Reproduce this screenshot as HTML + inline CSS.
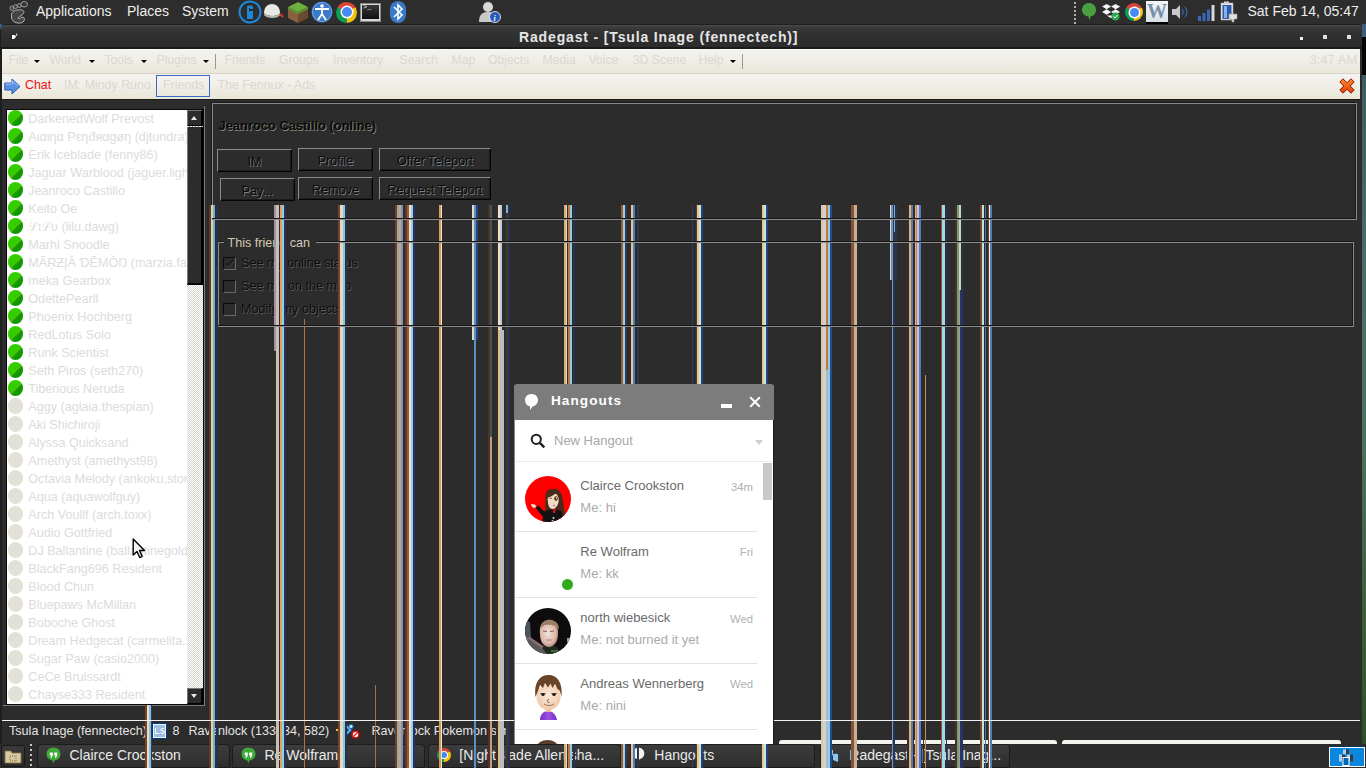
<!DOCTYPE html><html><head><meta charset="utf-8"><style>
html,body{margin:0;padding:0;}
body{width:1366px;height:768px;overflow:hidden;position:relative;background:#2c2c2c;font-family:"Liberation Sans", sans-serif;}
div{box-sizing:border-box;}
</style></head><body>
<div style="position:absolute;left:1362px;top:24px;width:4px;height:13px;background:#3d5f7d"></div>
<div style="position:absolute;left:1362px;top:37px;width:4px;height:38px;background:#060606"></div>
<div style="position:absolute;left:1362px;top:75px;width:4px;height:670px;background:linear-gradient(#3a5e62,#4a6e68 30%,#4a7260 55%,#3a6038 80%,#2e5028)"></div>
<div style="position:absolute;left:0px;top:24px;width:2px;height:5px;background:#3d5f7d"></div>
<div style="position:absolute;left:0px;top:29px;width:2px;height:715px;background:#1e1e1e"></div>
<div style="position:absolute;left:0px;top:0px;width:1366px;height:24px;background:#2d2d2d"></div>
<div style="position:absolute;left:36px;top:4.15px;font-size:14px;line-height:14px;color:#eeeeec;white-space:pre;">Applications</div>
<div style="position:absolute;left:127px;top:4.15px;font-size:14px;line-height:14px;color:#eeeeec;white-space:pre;">Places</div>
<div style="position:absolute;left:182px;top:4.15px;font-size:14px;line-height:14px;color:#eeeeec;white-space:pre;">System</div>
<div style="position:absolute;left:1247.5px;top:4.15px;font-size:14px;line-height:14px;color:#eeeeec;white-space:pre;">Sat Feb 14, 05:47</div>
<div style="position:absolute;left:1px;top:24px;width:1361px;height:25px;background:linear-gradient(#1e1e1e 0px,#1e1e1e 1px,#4c4c4c 1px,#3c3c3c 3px,#333333 7px,#2e2e2e 15px,#2c2c2c 23px,#1a1a1a 23px);border-radius:5px 5px 0 0"></div>
<div style="position:absolute;left:519px;top:29.95px;font-size:14px;line-height:14px;color:#e6e6e6;white-space:pre;font-weight:bold;letter-spacing:0.85px">Radegast - [Tsula Inage (fennectech)]</div>
<div style="position:absolute;left:1300px;top:37px;width:2.5px;height:2.5px;background:#f0f0f0"></div>
<div style="position:absolute;left:1323px;top:35px;width:4px;height:4px;background:#e0e0e0"></div>
<div style="position:absolute;left:1347px;top:35px;width:4px;height:4px;background:#e0e0e0"></div>
<div style="position:absolute;left:2px;top:49px;width:1358px;height:25px;background:linear-gradient(#fafaf8 0px,#fafaf8 1px,#f3f2ee 1px,#f0eee8 10px,#eae7d8);border-bottom:1px solid #d6d3c8"></div>
<div style="position:absolute;left:8.5px;top:53.87px;font-size:12.2px;line-height:12.2px;color:#dad8d2;white-space:pre;">File</div>
<div style="position:absolute;left:49.5px;top:53.87px;font-size:12.2px;line-height:12.2px;color:#dad8d2;white-space:pre;">World</div>
<div style="position:absolute;left:104.5px;top:53.87px;font-size:12.2px;line-height:12.2px;color:#dad8d2;white-space:pre;">Tools</div>
<div style="position:absolute;left:156.5px;top:53.87px;font-size:12.2px;line-height:12.2px;color:#dad8d2;white-space:pre;">Plugins</div>
<div style="position:absolute;left:224.5px;top:53.87px;font-size:12.2px;line-height:12.2px;color:#dad8d2;white-space:pre;">Friends</div>
<div style="position:absolute;left:279.0px;top:53.87px;font-size:12.2px;line-height:12.2px;color:#dad8d2;white-space:pre;">Groups</div>
<div style="position:absolute;left:333.0px;top:53.87px;font-size:12.2px;line-height:12.2px;color:#dad8d2;white-space:pre;">Inventory</div>
<div style="position:absolute;left:399.5px;top:53.87px;font-size:12.2px;line-height:12.2px;color:#dad8d2;white-space:pre;">Search</div>
<div style="position:absolute;left:451.5px;top:53.87px;font-size:12.2px;line-height:12.2px;color:#dad8d2;white-space:pre;">Map</div>
<div style="position:absolute;left:488.0px;top:53.87px;font-size:12.2px;line-height:12.2px;color:#dad8d2;white-space:pre;">Objects</div>
<div style="position:absolute;left:542.5px;top:53.87px;font-size:12.2px;line-height:12.2px;color:#dad8d2;white-space:pre;">Media</div>
<div style="position:absolute;left:588.5px;top:53.87px;font-size:12.2px;line-height:12.2px;color:#dad8d2;white-space:pre;">Voice</div>
<div style="position:absolute;left:632.9px;top:53.87px;font-size:12.2px;line-height:12.2px;color:#dad8d2;white-space:pre;">3D Scene</div>
<div style="position:absolute;left:698.5px;top:53.87px;font-size:12.2px;line-height:12.2px;color:#dad8d2;white-space:pre;">Help</div>
<div style="position:absolute;left:34px;top:59.5px;width:0;height:0;border-left:3px solid transparent;border-right:3px solid transparent;border-top:3.5px solid #000"></div>
<div style="position:absolute;left:89px;top:59.5px;width:0;height:0;border-left:3px solid transparent;border-right:3px solid transparent;border-top:3.5px solid #000"></div>
<div style="position:absolute;left:141px;top:59.5px;width:0;height:0;border-left:3px solid transparent;border-right:3px solid transparent;border-top:3.5px solid #000"></div>
<div style="position:absolute;left:203px;top:59.5px;width:0;height:0;border-left:3px solid transparent;border-right:3px solid transparent;border-top:3.5px solid #000"></div>
<div style="position:absolute;left:729.7px;top:59.5px;width:0;height:0;border-left:3px solid transparent;border-right:3px solid transparent;border-top:3.5px solid #000"></div>
<div style="position:absolute;left:215px;top:54px;width:1px;height:15px;background:#9a9890"></div>
<div style="position:absolute;left:742px;top:54px;width:1px;height:15px;background:#9a9890"></div>
<div style="position:absolute;left:1309.3px;top:53.11px;font-size:13.1px;line-height:13.1px;color:#dad8d2;white-space:pre;">3:47 AM</div>
<div style="position:absolute;left:2px;top:74px;width:1358px;height:25px;background:linear-gradient(#f4f3f0,#f1efea 40%,#eae6d6)"></div>
<div style="position:absolute;left:25px;top:78.70px;font-size:12.4px;line-height:12.4px;color:#ee1111;white-space:pre;">Chat</div>
<div style="position:absolute;left:64px;top:78.70px;font-size:12.4px;line-height:12.4px;color:#dad8d2;white-space:pre;">IM: Mindy Runo</div>
<div style="position:absolute;left:156px;top:75px;width:54px;height:22px;border:1.5px solid #3a6ac8"></div>
<div style="position:absolute;left:163px;top:78.70px;font-size:12.4px;line-height:12.4px;color:#dad8d2;white-space:pre;">Friends</div>
<div style="position:absolute;left:217.5px;top:78.70px;font-size:12.4px;line-height:12.4px;color:#dad8d2;white-space:pre;">The Fennux - Ads</div>
<div style="position:absolute;left:2px;top:99px;width:1360px;height:621px;background:#2c2c2c"></div>
<div style="position:absolute;left:2px;top:99px;width:1358px;height:1px;background:#1c1c1c"></div>
<div style="position:absolute;left:5px;top:108px;width:200px;height:598px;border-right:1px solid #7a7a7a;border-bottom:1px solid #7a7a7a"></div>
<div style="position:absolute;left:6px;top:109px;width:198px;height:596px;background:#0a0a0a"></div>
<div style="position:absolute;left:7px;top:110px;width:180px;height:594px;background:#ffffff"></div>
<div style="position:absolute;left:7px;top:110px;width:180px;height:594px;overflow:hidden">
<div style="position:absolute;left:0.5px;top:0.3px;width:15.5px;height:15.5px;border-radius:50%;background:linear-gradient(135deg,#36d000 0%,#33cc00 58%,#3a8a10 58%,#3a8a10 64%,#0c9c00 64%,#0a9a00 100%)"></div>
<div style="position:absolute;left:21.3px;top:3.43px;font-size:12.6px;line-height:12.6px;color:#dcdcdc;white-space:pre;">DarkenedWolf Prevost</div>
<div style="position:absolute;left:0.5px;top:18.3px;width:15.5px;height:15.5px;border-radius:50%;background:linear-gradient(135deg,#36d000 0%,#33cc00 58%,#3a8a10 58%,#3a8a10 64%,#0c9c00 64%,#0a9a00 100%)"></div>
<div style="position:absolute;left:21.3px;top:21.43px;font-size:12.6px;line-height:12.6px;color:#dcdcdc;white-space:pre;">Αιαιηα Ρεηđяαgøŋ (djtundra)</div>
<div style="position:absolute;left:0.5px;top:36.3px;width:15.5px;height:15.5px;border-radius:50%;background:linear-gradient(135deg,#36d000 0%,#33cc00 58%,#3a8a10 58%,#3a8a10 64%,#0c9c00 64%,#0a9a00 100%)"></div>
<div style="position:absolute;left:21.3px;top:39.43px;font-size:12.6px;line-height:12.6px;color:#dcdcdc;white-space:pre;">Erik Iceblade (fenny86)</div>
<div style="position:absolute;left:0.5px;top:54.3px;width:15.5px;height:15.5px;border-radius:50%;background:linear-gradient(135deg,#36d000 0%,#33cc00 58%,#3a8a10 58%,#3a8a10 64%,#0c9c00 64%,#0a9a00 100%)"></div>
<div style="position:absolute;left:21.3px;top:57.43px;font-size:12.6px;line-height:12.6px;color:#dcdcdc;white-space:pre;">Jaguar Warblood (jaguer.light)</div>
<div style="position:absolute;left:0.5px;top:72.3px;width:15.5px;height:15.5px;border-radius:50%;background:linear-gradient(135deg,#36d000 0%,#33cc00 58%,#3a8a10 58%,#3a8a10 64%,#0c9c00 64%,#0a9a00 100%)"></div>
<div style="position:absolute;left:21.3px;top:75.43px;font-size:12.6px;line-height:12.6px;color:#dcdcdc;white-space:pre;">Jeanroco Castillo</div>
<div style="position:absolute;left:0.5px;top:90.3px;width:15.5px;height:15.5px;border-radius:50%;background:linear-gradient(135deg,#36d000 0%,#33cc00 58%,#3a8a10 58%,#3a8a10 64%,#0c9c00 64%,#0a9a00 100%)"></div>
<div style="position:absolute;left:21.3px;top:93.43px;font-size:12.6px;line-height:12.6px;color:#dcdcdc;white-space:pre;">Keito Oe</div>
<div style="position:absolute;left:0.5px;top:108.3px;width:15.5px;height:15.5px;border-radius:50%;background:linear-gradient(135deg,#36d000 0%,#33cc00 58%,#3a8a10 58%,#3a8a10 64%,#0c9c00 64%,#0a9a00 100%)"></div>
<div style="position:absolute;left:21.3px;top:111.43px;font-size:12.6px;line-height:12.6px;color:#dcdcdc;white-space:pre;">ℒιℒυ (lilu.dawg)</div>
<div style="position:absolute;left:0.5px;top:126.3px;width:15.5px;height:15.5px;border-radius:50%;background:linear-gradient(135deg,#36d000 0%,#33cc00 58%,#3a8a10 58%,#3a8a10 64%,#0c9c00 64%,#0a9a00 100%)"></div>
<div style="position:absolute;left:21.3px;top:129.43px;font-size:12.6px;line-height:12.6px;color:#dcdcdc;white-space:pre;">Marhi Snoodle</div>
<div style="position:absolute;left:0.5px;top:144.3px;width:15.5px;height:15.5px;border-radius:50%;background:linear-gradient(135deg,#36d000 0%,#33cc00 58%,#3a8a10 58%,#3a8a10 64%,#0c9c00 64%,#0a9a00 100%)"></div>
<div style="position:absolute;left:21.3px;top:147.43px;font-size:12.6px;line-height:12.6px;color:#dcdcdc;white-space:pre;">MĀŖƵĮĂ ƊĒMŎŊ (marzia.fan)</div>
<div style="position:absolute;left:0.5px;top:162.3px;width:15.5px;height:15.5px;border-radius:50%;background:linear-gradient(135deg,#36d000 0%,#33cc00 58%,#3a8a10 58%,#3a8a10 64%,#0c9c00 64%,#0a9a00 100%)"></div>
<div style="position:absolute;left:21.3px;top:165.43px;font-size:12.6px;line-height:12.6px;color:#dcdcdc;white-space:pre;">meka Gearbox</div>
<div style="position:absolute;left:0.5px;top:180.3px;width:15.5px;height:15.5px;border-radius:50%;background:linear-gradient(135deg,#36d000 0%,#33cc00 58%,#3a8a10 58%,#3a8a10 64%,#0c9c00 64%,#0a9a00 100%)"></div>
<div style="position:absolute;left:21.3px;top:183.43px;font-size:12.6px;line-height:12.6px;color:#dcdcdc;white-space:pre;">OdettePearll</div>
<div style="position:absolute;left:0.5px;top:198.3px;width:15.5px;height:15.5px;border-radius:50%;background:linear-gradient(135deg,#36d000 0%,#33cc00 58%,#3a8a10 58%,#3a8a10 64%,#0c9c00 64%,#0a9a00 100%)"></div>
<div style="position:absolute;left:21.3px;top:201.43px;font-size:12.6px;line-height:12.6px;color:#dcdcdc;white-space:pre;">Phoenix Hochberg</div>
<div style="position:absolute;left:0.5px;top:216.3px;width:15.5px;height:15.5px;border-radius:50%;background:linear-gradient(135deg,#36d000 0%,#33cc00 58%,#3a8a10 58%,#3a8a10 64%,#0c9c00 64%,#0a9a00 100%)"></div>
<div style="position:absolute;left:21.3px;top:219.43px;font-size:12.6px;line-height:12.6px;color:#dcdcdc;white-space:pre;">RedLotus Solo</div>
<div style="position:absolute;left:0.5px;top:234.3px;width:15.5px;height:15.5px;border-radius:50%;background:linear-gradient(135deg,#36d000 0%,#33cc00 58%,#3a8a10 58%,#3a8a10 64%,#0c9c00 64%,#0a9a00 100%)"></div>
<div style="position:absolute;left:21.3px;top:237.43px;font-size:12.6px;line-height:12.6px;color:#dcdcdc;white-space:pre;">Runk Scientist</div>
<div style="position:absolute;left:0.5px;top:252.3px;width:15.5px;height:15.5px;border-radius:50%;background:linear-gradient(135deg,#36d000 0%,#33cc00 58%,#3a8a10 58%,#3a8a10 64%,#0c9c00 64%,#0a9a00 100%)"></div>
<div style="position:absolute;left:21.3px;top:255.43px;font-size:12.6px;line-height:12.6px;color:#dcdcdc;white-space:pre;">Seth Piros (seth270)</div>
<div style="position:absolute;left:0.5px;top:270.3px;width:15.5px;height:15.5px;border-radius:50%;background:linear-gradient(135deg,#36d000 0%,#33cc00 58%,#3a8a10 58%,#3a8a10 64%,#0c9c00 64%,#0a9a00 100%)"></div>
<div style="position:absolute;left:21.3px;top:273.43px;font-size:12.6px;line-height:12.6px;color:#dcdcdc;white-space:pre;">Tiberious Neruda</div>
<div style="position:absolute;left:0.5px;top:288.3px;width:15.5px;height:15.5px;border-radius:50%;background:#e3e1d6"></div>
<div style="position:absolute;left:21.3px;top:291.43px;font-size:12.6px;line-height:12.6px;color:#dcdcdc;white-space:pre;">Aggy (aglaia.thespian)</div>
<div style="position:absolute;left:0.5px;top:306.3px;width:15.5px;height:15.5px;border-radius:50%;background:#e3e1d6"></div>
<div style="position:absolute;left:21.3px;top:309.43px;font-size:12.6px;line-height:12.6px;color:#dcdcdc;white-space:pre;">Aki Shichiroji</div>
<div style="position:absolute;left:0.5px;top:324.3px;width:15.5px;height:15.5px;border-radius:50%;background:#e3e1d6"></div>
<div style="position:absolute;left:21.3px;top:327.43px;font-size:12.6px;line-height:12.6px;color:#dcdcdc;white-space:pre;">Alyssa Quicksand</div>
<div style="position:absolute;left:0.5px;top:342.3px;width:15.5px;height:15.5px;border-radius:50%;background:#e3e1d6"></div>
<div style="position:absolute;left:21.3px;top:345.43px;font-size:12.6px;line-height:12.6px;color:#dcdcdc;white-space:pre;">Amethyst (amethyst98)</div>
<div style="position:absolute;left:0.5px;top:360.3px;width:15.5px;height:15.5px;border-radius:50%;background:#e3e1d6"></div>
<div style="position:absolute;left:21.3px;top:363.43px;font-size:12.6px;line-height:12.6px;color:#dcdcdc;white-space:pre;">Octavia Melody (ankoku.stone)</div>
<div style="position:absolute;left:0.5px;top:378.3px;width:15.5px;height:15.5px;border-radius:50%;background:#e3e1d6"></div>
<div style="position:absolute;left:21.3px;top:381.43px;font-size:12.6px;line-height:12.6px;color:#dcdcdc;white-space:pre;">Aqua (aquawolfguy)</div>
<div style="position:absolute;left:0.5px;top:396.3px;width:15.5px;height:15.5px;border-radius:50%;background:#e3e1d6"></div>
<div style="position:absolute;left:21.3px;top:399.43px;font-size:12.6px;line-height:12.6px;color:#dcdcdc;white-space:pre;">Arch Voullf (arch.toxx)</div>
<div style="position:absolute;left:0.5px;top:414.3px;width:15.5px;height:15.5px;border-radius:50%;background:#e3e1d6"></div>
<div style="position:absolute;left:21.3px;top:417.43px;font-size:12.6px;line-height:12.6px;color:#dcdcdc;white-space:pre;">Audio Gottfried</div>
<div style="position:absolute;left:0.5px;top:432.3px;width:15.5px;height:15.5px;border-radius:50%;background:#e3e1d6"></div>
<div style="position:absolute;left:21.3px;top:435.43px;font-size:12.6px;line-height:12.6px;color:#dcdcdc;white-space:pre;">DJ Ballantine (ballantinegold)</div>
<div style="position:absolute;left:0.5px;top:450.3px;width:15.5px;height:15.5px;border-radius:50%;background:#e3e1d6"></div>
<div style="position:absolute;left:21.3px;top:453.43px;font-size:12.6px;line-height:12.6px;color:#dcdcdc;white-space:pre;">BlackFang696 Resident</div>
<div style="position:absolute;left:0.5px;top:468.3px;width:15.5px;height:15.5px;border-radius:50%;background:#e3e1d6"></div>
<div style="position:absolute;left:21.3px;top:471.43px;font-size:12.6px;line-height:12.6px;color:#dcdcdc;white-space:pre;">Blood Chun</div>
<div style="position:absolute;left:0.5px;top:486.3px;width:15.5px;height:15.5px;border-radius:50%;background:#e3e1d6"></div>
<div style="position:absolute;left:21.3px;top:489.43px;font-size:12.6px;line-height:12.6px;color:#dcdcdc;white-space:pre;">Bluepaws McMillan</div>
<div style="position:absolute;left:0.5px;top:504.3px;width:15.5px;height:15.5px;border-radius:50%;background:#e3e1d6"></div>
<div style="position:absolute;left:21.3px;top:507.43px;font-size:12.6px;line-height:12.6px;color:#dcdcdc;white-space:pre;">Boboche Ghost</div>
<div style="position:absolute;left:0.5px;top:522.3px;width:15.5px;height:15.5px;border-radius:50%;background:#e3e1d6"></div>
<div style="position:absolute;left:21.3px;top:525.43px;font-size:12.6px;line-height:12.6px;color:#dcdcdc;white-space:pre;">Dream Hedgecat (carmelita.x)</div>
<div style="position:absolute;left:0.5px;top:540.3px;width:15.5px;height:15.5px;border-radius:50%;background:#e3e1d6"></div>
<div style="position:absolute;left:21.3px;top:543.43px;font-size:12.6px;line-height:12.6px;color:#dcdcdc;white-space:pre;">Sugar Paw (casio2000)</div>
<div style="position:absolute;left:0.5px;top:558.3px;width:15.5px;height:15.5px;border-radius:50%;background:#e3e1d6"></div>
<div style="position:absolute;left:21.3px;top:561.43px;font-size:12.6px;line-height:12.6px;color:#dcdcdc;white-space:pre;">CeCe Bruissardt</div>
<div style="position:absolute;left:0.5px;top:576.3px;width:15.5px;height:15.5px;border-radius:50%;background:#e3e1d6"></div>
<div style="position:absolute;left:21.3px;top:579.43px;font-size:12.6px;line-height:12.6px;color:#dcdcdc;white-space:pre;">Chayse333 Resident</div>
</div>
<div style="position:absolute;left:187px;top:110px;width:16px;height:594px;background:#2c2c2c"></div>
<div style="position:absolute;left:187px;top:110px;width:16px;height:16px;background:#2c2c2c;border-top:1px solid #777;border-left:1px solid #777;border-right:2px solid #000;border-bottom:1px solid #000"></div>
<div style="position:absolute;left:191px;top:115.5px;width:0;height:0;border-left:3.5px solid transparent;border-right:3.5px solid transparent;border-bottom:4px solid #e8e8e8"></div>
<div style="position:absolute;left:187px;top:126px;width:16px;height:1px;background:repeating-linear-gradient(90deg,#f0f0f0 0 2px,#888 2px 3px)"></div>
<div style="position:absolute;left:187px;top:127px;width:16px;height:158px;background:#2c2c2c;border-left:1px solid #777;border-right:2px solid #000;border-bottom:2px solid #000"></div>
<div style="position:absolute;left:187px;top:285px;width:16px;height:403px;background-color:#f4f3ef;background-image:repeating-conic-gradient(#d8d5cc 0 25%,#ffffff 0 50%);background-size:2px 2px"></div>
<div style="position:absolute;left:187px;top:688px;width:16px;height:16px;background:#2c2c2c;border-top:1px solid #777;border-left:1px solid #777;border-right:2px solid #000;border-bottom:1px solid #000"></div>
<div style="position:absolute;left:191px;top:694px;width:0;height:0;border-left:3.5px solid transparent;border-right:3.5px solid transparent;border-top:4px solid #e8e8e8"></div>
<div style="position:absolute;left:204px;top:106px;width:1px;height:600px;background:#7a7a7a"></div>
<div style="position:absolute;left:3px;top:705px;width:202px;height:1px;background:#7a7a7a"></div>
<div style="position:absolute;left:211px;top:102px;width:1145px;height:117px;border:1px solid #181818"></div>
<div style="position:absolute;left:212px;top:103px;width:1145px;height:117px;border:1px solid #8a8a8a;border-top-color:#8a8a8a"></div>
<div style="position:absolute;left:218.5px;top:120.28px;font-size:12.9px;line-height:12.9px;color:#080808;white-space:pre;font-weight:bold;text-shadow:0.8px 0.8px 0 #8a8478">Jeanroco Castillo (online)</div>
<div style="position:absolute;left:217px;top:149px;width:75px;height:23px;background:#2c2c2c;border-top:1px solid #8c8c8c;border-left:1px solid #8c8c8c;border-right:1px solid #050505;border-bottom:1px solid #050505;box-shadow:inset -1px -1px 0 #1c1c1c"></div>
<div style="position:absolute;left:217px;top:150.5px;width:75px;height:23px;line-height:23px;text-align:center;font-size:12.6px;color:#080808;text-shadow:0.8px 0.8px 0 #7a8084">IM</div>
<div style="position:absolute;left:298px;top:148px;width:75px;height:23px;background:#2c2c2c;border-top:1px solid #8c8c8c;border-left:1px solid #8c8c8c;border-right:1px solid #050505;border-bottom:1px solid #050505;box-shadow:inset -1px -1px 0 #1c1c1c"></div>
<div style="position:absolute;left:298px;top:149.5px;width:75px;height:23px;line-height:23px;text-align:center;font-size:12.6px;color:#080808;text-shadow:0.8px 0.8px 0 #7a8084">Profile</div>
<div style="position:absolute;left:379px;top:148px;width:112px;height:23px;background:#2c2c2c;border-top:1px solid #8c8c8c;border-left:1px solid #8c8c8c;border-right:1px solid #050505;border-bottom:1px solid #050505;box-shadow:inset -1px -1px 0 #1c1c1c"></div>
<div style="position:absolute;left:379px;top:149.5px;width:112px;height:23px;line-height:23px;text-align:center;font-size:12.6px;color:#080808;text-shadow:0.8px 0.8px 0 #7a8084">Offer Teleport</div>
<div style="position:absolute;left:220px;top:178px;width:75px;height:23px;background:#2c2c2c;border-top:1px solid #8c8c8c;border-left:1px solid #8c8c8c;border-right:1px solid #050505;border-bottom:1px solid #050505;box-shadow:inset -1px -1px 0 #1c1c1c"></div>
<div style="position:absolute;left:220px;top:179.5px;width:75px;height:23px;line-height:23px;text-align:center;font-size:12.6px;color:#080808;text-shadow:0.8px 0.8px 0 #7a8084">Pay...</div>
<div style="position:absolute;left:298px;top:177px;width:75px;height:23px;background:#2c2c2c;border-top:1px solid #8c8c8c;border-left:1px solid #8c8c8c;border-right:1px solid #050505;border-bottom:1px solid #050505;box-shadow:inset -1px -1px 0 #1c1c1c"></div>
<div style="position:absolute;left:298px;top:178.5px;width:75px;height:23px;line-height:23px;text-align:center;font-size:12.6px;color:#080808;text-shadow:0.8px 0.8px 0 #7a8084">Remove</div>
<div style="position:absolute;left:379px;top:177px;width:112px;height:23px;background:#2c2c2c;border-top:1px solid #8c8c8c;border-left:1px solid #8c8c8c;border-right:1px solid #050505;border-bottom:1px solid #050505;box-shadow:inset -1px -1px 0 #1c1c1c"></div>
<div style="position:absolute;left:379px;top:178.5px;width:112px;height:23px;line-height:23px;text-align:center;font-size:12.6px;color:#080808;text-shadow:0.8px 0.8px 0 #7a8084">Request Teleport</div>
<div style="position:absolute;left:217px;top:241px;width:1136px;height:85px;border:1px solid #181818"></div>
<div style="position:absolute;left:218px;top:242px;width:1136px;height:85px;border:1px solid #8a8a8a"></div>
<div style="position:absolute;left:224px;top:236px;width:92px;height:12px;background:#2c2c2c"></div>
<div style="position:absolute;left:227.5px;top:236.63px;font-size:12.6px;line-height:12.6px;color:#d2cab4;white-space:pre;">This friend can</div>
<div style="position:absolute;left:223px;top:257px;width:13px;height:13px;border-top:1px solid #0a0a0a;border-left:1px solid #0a0a0a;border-right:1px solid #6a6a6a;border-bottom:1px solid #6a6a6a;background:#2c2c2c"></div>
<div style="position:absolute;left:241px;top:256.73px;font-size:12.6px;line-height:12.6px;color:#0c0c0c;white-space:pre;text-shadow:0.8px 0.8px 0 #5a5c5c">See my online status</div>
<svg style="position:absolute;left:224px;top:258px" width="11" height="11" viewBox="0 0 11 11"><path d="M2 5.5 L4.5 8 L9 2.5" stroke="#161616" stroke-width="1.8" fill="none"/><path d="M2.8 6.8 L4.8 8.8 L9.5 3.5" stroke="#555" stroke-width="0.8" fill="none"/></svg>
<div style="position:absolute;left:223px;top:280px;width:13px;height:13px;border-top:1px solid #0a0a0a;border-left:1px solid #0a0a0a;border-right:1px solid #6a6a6a;border-bottom:1px solid #6a6a6a;background:#2c2c2c"></div>
<div style="position:absolute;left:241px;top:279.73px;font-size:12.6px;line-height:12.6px;color:#0c0c0c;white-space:pre;text-shadow:0.8px 0.8px 0 #5a5c5c">See me on the map</div>
<div style="position:absolute;left:223px;top:303px;width:13px;height:13px;border-top:1px solid #0a0a0a;border-left:1px solid #0a0a0a;border-right:1px solid #6a6a6a;border-bottom:1px solid #6a6a6a;background:#2c2c2c"></div>
<div style="position:absolute;left:241px;top:302.73px;font-size:12.6px;line-height:12.6px;color:#0c0c0c;white-space:pre;text-shadow:0.8px 0.8px 0 #5a5c5c">Modify my objects</div>
<div style="position:absolute;left:2px;top:720px;width:1358px;height:1px;background:#f2f2f2"></div>
<div style="position:absolute;left:9px;top:725.13px;font-size:12.6px;line-height:12.6px;color:#e4e4e4;white-space:pre;">Tsula Inage (fennectech)</div>
<div style="position:absolute;left:151.5px;top:723px;width:15px;height:15.5px;background:#9cc0e4;border:1px solid #063a88;box-shadow:inset 0 0 0 1px #f0f6ff"></div>
<div style="position:absolute;left:154px;top:726.26px;font-size:9.5px;line-height:9.5px;color:#ffffff;white-space:pre;font-weight:bold;text-shadow:0 0 1px #2a6ab8">L$</div>
<div style="position:absolute;left:172.5px;top:725.13px;font-size:12.6px;line-height:12.6px;color:#e4e4e4;white-space:pre;">8</div>
<div style="position:absolute;left:188.5px;top:725.13px;font-size:12.6px;line-height:12.6px;color:#e4e4e4;white-space:pre;">Ravenlock (133, 34, 582)</div>
<svg style="position:absolute;left:330px;top:718px" width="36" height="24" viewBox="0 0 36 24">
<rect x="6" y="11" width="4.5" height="2" fill="#f0c040"/>
<path d="M15 7 L20.5 12 L15.5 16.5" stroke="#1a5aa8" stroke-width="3.2" fill="none" stroke-linejoin="round"/>
<path d="M15 7 L20.5 12 L15.5 16.5" stroke="#80c8f0" stroke-width="1.3" fill="none" stroke-linejoin="round"/>
<circle cx="21" cy="8.5" r="2.2" fill="#a8e0f8" stroke="#1a5aa8" stroke-width="1"/>
<circle cx="25.5" cy="16.5" r="3.3" fill="#ffffff" stroke="#e01010" stroke-width="1.4"/><path d="M23.5 18.5 L27.5 14.5" stroke="#e01010" stroke-width="1.2"/></svg>
<div style="position:absolute;left:371.5px;top:725.13px;font-size:12.6px;line-height:12.6px;color:#e4e4e4;white-space:pre;">Ravenlock Pokemon sim</div>
<div style="position:absolute;left:0px;top:744px;width:1366px;height:24px;background:#2c2c2c"></div>
<div style="position:absolute;left:779px;top:740px;width:278px;height:4px;background:#f4f4ee;border-radius:3px 3px 0 0"></div>
<div style="position:absolute;left:1062px;top:740px;width:279px;height:4px;background:#f4f4ee;border-radius:3px 3px 0 0"></div>
<div style="position:absolute;left:1px;top:745px;width:24px;height:22px;background:linear-gradient(#3a3a3a,#2a2a2a);border:1px solid #1a1a1a;border-radius:3px"></div>
<svg style="position:absolute;left:4px;top:748px" width="18" height="16" viewBox="0 0 18 16"><path d="M1 3 L7 3 L8 5 L17 5 L17 15 L1 15 Z" fill="#d8c8a0" stroke="#8a7050" stroke-width="0.8"/><rect x="6" y="8" width="6" height="5" fill="none" stroke="#6a5030" stroke-width="0.8" stroke-dasharray="1 1"/></svg>
<div style="position:absolute;left:30px;top:744px;width:2px;height:2px;background:#c8c8c8"></div>
<div style="position:absolute;left:30px;top:749px;width:2px;height:2px;background:#c8c8c8"></div>
<div style="position:absolute;left:30px;top:754px;width:2px;height:2px;background:#c8c8c8"></div>
<div style="position:absolute;left:30px;top:759px;width:2px;height:2px;background:#c8c8c8"></div>
<div style="position:absolute;left:30px;top:764px;width:2px;height:2px;background:#c8c8c8"></div>
<div style="position:absolute;left:37px;top:744px;width:193px;height:24px;background:linear-gradient(#3c3c3c,#2e2e2e);border:1px solid #1c1c1c;border-radius:4px 4px 0 0"></div>
<svg style="position:absolute;left:37px;margin-left:9px;top:747px" width="15" height="17" viewBox="0 0 15 17"><path d="M7.5 0.5 C11.5 0.5 14.5 3.3 14.5 7 C14.5 10.5 12 13 8.5 13.5 L7.2 16.5 L6.5 13.4 C3 13 0.5 10.5 0.5 7 C0.5 3.3 3.5 0.5 7.5 0.5 Z" fill="#3eaa3a"/><path d="M3.8 5.5 h3 v3 l-1.2 2.2 h-1.2 l0.8 -2.2 h-1.4 Z M8.2 5.5 h3 v3 l-1.2 2.2 h-1.2 l0.8 -2.2 h-1.4 Z" fill="#fff"/></svg>
<div style="position:absolute;left:69.5px;top:747.85px;font-size:14px;line-height:14px;color:#eaeaea;white-space:pre;">Clairce Crookston</div>
<div style="position:absolute;left:232px;top:744px;width:193px;height:24px;background:linear-gradient(#3c3c3c,#2e2e2e);border:1px solid #1c1c1c;border-radius:4px 4px 0 0"></div>
<svg style="position:absolute;left:232px;margin-left:9px;top:747px" width="15" height="17" viewBox="0 0 15 17"><path d="M7.5 0.5 C11.5 0.5 14.5 3.3 14.5 7 C14.5 10.5 12 13 8.5 13.5 L7.2 16.5 L6.5 13.4 C3 13 0.5 10.5 0.5 7 C0.5 3.3 3.5 0.5 7.5 0.5 Z" fill="#3eaa3a"/><path d="M3.8 5.5 h3 v3 l-1.2 2.2 h-1.2 l0.8 -2.2 h-1.4 Z M8.2 5.5 h3 v3 l-1.2 2.2 h-1.2 l0.8 -2.2 h-1.4 Z" fill="#fff"/></svg>
<div style="position:absolute;left:264.5px;top:747.85px;font-size:14px;line-height:14px;color:#eaeaea;white-space:pre;">Re Wolfram</div>
<div style="position:absolute;left:427.5px;top:744px;width:193px;height:24px;background:linear-gradient(#3c3c3c,#2e2e2e);border:1px solid #1c1c1c;border-radius:4px 4px 0 0"></div>
<div style="position:absolute;left:427.5px;margin-left:9px;top:748px;width:14px;height:14px;border-radius:50%;background:conic-gradient(from -60deg,#db4437 0 120deg,#f4c20d 120deg 240deg,#0f9d58 240deg 360deg)"><div style="position:absolute;left:4px;top:4px;width:6px;height:6px;border-radius:50%;background:#4285f4;box-shadow:0 0 0 1px #fff"></div></div>
<div style="position:absolute;left:459.3px;top:747.85px;font-size:14px;line-height:14px;color:#eaeaea;white-space:pre;">[NightBlade Allen sha...</div>
<div style="position:absolute;left:625px;top:744px;width:190px;height:24px;background:linear-gradient(#3c3c3c,#2e2e2e);border:1px solid #1c1c1c;border-radius:4px 4px 0 0"></div>
<svg style="position:absolute;left:625px;margin-left:6.5px;top:747px" width="13" height="17" viewBox="0 0 13 17"><path d="M6.5 0.8 C10 0.8 12.3 3.3 12.3 6.5 C12.3 9.5 10.3 11.6 7.5 12.2 L5.5 16 L5.5 12.1 C2.6 11.6 0.7 9.5 0.7 6.5 C0.7 3.3 3 0.8 6.5 0.8 Z" fill="#f4f4f4"/></svg>
<div style="position:absolute;left:654.3px;top:747.85px;font-size:14px;line-height:14px;color:#eaeaea;white-space:pre;">Hangouts</div>
<div style="position:absolute;left:820px;top:744px;width:190px;height:24px;background:linear-gradient(#3c3c3c,#2e2e2e);border:1px solid #1c1c1c;border-radius:4px 4px 0 0"></div>
<svg style="position:absolute;left:820px;margin-left:9px;top:748px" width="12" height="15" viewBox="0 0 12 15"><path d="M1 1 L4 2 L4 7 L1 8 Z" fill="#8cc8f8"/><path d="M4 5.5 L9 6 L9 14 L4 12 Z" fill="#8cc8f8"/><path d="M4 2 L6 3 L6 6 L4 6 Z M9 6 L11 6.5 L11 13 L9 14 Z" fill="#3a3a36"/></svg>
<div style="position:absolute;left:849.3px;top:747.85px;font-size:14px;line-height:14px;color:#eaeaea;white-space:pre;">Radegast - [Tsula Inag...</div>
<div style="position:absolute;left:1328.5px;top:746.5px;width:36px;height:20px;background:#0a88e0;border:1px solid #ffffff;box-shadow:0 -1px 0 #003a60"></div>
<svg style="position:absolute;left:1338px;top:749px" width="16" height="17" viewBox="0 0 16 17"><rect x="5" y="0.5" width="3" height="5" fill="#a8d0f8"/><rect x="8" y="0.5" width="3" height="5" fill="#3a3a38"/><rect x="1" y="5.5" width="3" height="7" fill="#a8d0f8"/><rect x="4" y="5.5" width="3" height="7" fill="#3a3a38"/><rect x="9" y="5.5" width="3" height="7" fill="#a8d0f8"/><rect x="12" y="5.5" width="3" height="7" fill="#3a3a38"/><rect x="4.5" y="8" width="7" height="9" fill="#ffffff"/><rect x="5.5" y="9" width="5" height="7" fill="#0068b8"/></svg>
<div style="position:absolute;left:209px;top:205px;width:1.5px;height:563px;background:#5a3a30"></div>
<div style="position:absolute;left:211px;top:205px;width:2px;height:563px;background:#e8d090"></div>
<div style="position:absolute;left:213px;top:205px;width:2px;height:563px;background:#70b0e0"></div>
<div style="position:absolute;left:215.5px;top:205px;width:2.5px;height:563px;background:#2a3048"></div>
<div style="position:absolute;left:274px;top:205px;width:2px;height:146px;background:#a090a0"></div>
<div style="position:absolute;left:276px;top:205px;width:3px;height:563px;background:#c8c0b0"></div>
<div style="position:absolute;left:304px;top:319px;width:1px;height:449px;background:#b07040"></div>
<div style="position:absolute;left:145px;top:705px;width:2px;height:63px;background:#804028"></div>
<div style="position:absolute;left:147px;top:705px;width:2px;height:63px;background:#e8e0b8"></div>
<div style="position:absolute;left:149px;top:705px;width:2px;height:63px;background:#80c0e0"></div>
<div style="position:absolute;left:151px;top:705px;width:1px;height:63px;background:#303860"></div>
<div style="position:absolute;left:280px;top:205px;width:2px;height:563px;background:#e0a060"></div>
<div style="position:absolute;left:282px;top:205px;width:2px;height:563px;background:#90d0e0"></div>
<div style="position:absolute;left:284px;top:205px;width:2px;height:563px;background:#2a3060"></div>
<div style="position:absolute;left:338px;top:205px;width:2px;height:563px;background:#7a4030"></div>
<div style="position:absolute;left:340px;top:205px;width:3px;height:563px;background:#e0dcb8"></div>
<div style="position:absolute;left:343px;top:205px;width:2px;height:563px;background:#88c8e8"></div>
<div style="position:absolute;left:345px;top:205px;width:2px;height:563px;background:#283050"></div>
<div style="position:absolute;left:395px;top:205px;width:2px;height:563px;background:#6a4030"></div>
<div style="position:absolute;left:397px;top:205px;width:2px;height:563px;background:#b8a080"></div>
<div style="position:absolute;left:399px;top:205px;width:2px;height:563px;background:#a0acc0"></div>
<div style="position:absolute;left:401px;top:205px;width:2px;height:563px;background:#909098"></div>
<div style="position:absolute;left:405px;top:205px;width:1.5px;height:563px;background:#5a3a30"></div>
<div style="position:absolute;left:406.5px;top:205px;width:2.5px;height:563px;background:#a05830"></div>
<div style="position:absolute;left:409px;top:205px;width:2px;height:563px;background:#e8e4d0"></div>
<div style="position:absolute;left:411px;top:205px;width:2px;height:563px;background:#90d0f0"></div>
<div style="position:absolute;left:413px;top:205px;width:2px;height:563px;background:#283060"></div>
<div style="position:absolute;left:439px;top:205px;width:2px;height:563px;background:#e09850"></div>
<div style="position:absolute;left:441px;top:205px;width:1px;height:563px;background:#e0e8e0"></div>
<div style="position:absolute;left:472px;top:205px;width:2px;height:135px;background:#e0dcc8"></div>
<div style="position:absolute;left:474px;top:205px;width:2px;height:563px;background:#5890c8"></div>
<div style="position:absolute;left:476px;top:205px;width:2px;height:135px;background:#304080"></div>
<div style="position:absolute;left:375px;top:685px;width:1px;height:83px;background:#a87040"></div>
<div style="position:absolute;left:488px;top:205px;width:2px;height:563px;background:#503028"></div>
<div style="position:absolute;left:490px;top:205px;width:2px;height:232px;background:#405850"></div>
<div style="position:absolute;left:490px;top:437px;width:2px;height:331px;background:#c0a080"></div>
<div style="position:absolute;left:496px;top:205px;width:2px;height:563px;background:#3a2a28"></div>
<div style="position:absolute;left:498px;top:205px;width:2px;height:125px;background:#e8e4c8"></div>
<div style="position:absolute;left:498px;top:330px;width:2px;height:438px;background:#d8c080"></div>
<div style="position:absolute;left:500px;top:205px;width:2px;height:125px;background:#c0c8e0"></div>
<div style="position:absolute;left:500px;top:330px;width:4px;height:438px;background:#b8bcc8"></div>
<div style="position:absolute;left:506px;top:205px;width:2px;height:8px;background:#80b0d0"></div>
<div style="position:absolute;left:506px;top:213px;width:2px;height:555px;background:#3a3a30"></div>
<div style="position:absolute;left:508px;top:205px;width:2px;height:563px;background:#283050"></div>
<div style="position:absolute;left:564px;top:205px;width:2px;height:563px;background:#d8b070"></div>
<div style="position:absolute;left:566px;top:205px;width:1px;height:563px;background:#e8dcc8"></div>
<div style="position:absolute;left:568px;top:205px;width:2px;height:563px;background:#c07840"></div>
<div style="position:absolute;left:570px;top:205px;width:2px;height:563px;background:#88d0e0"></div>
<div style="position:absolute;left:573px;top:205px;width:2px;height:563px;background:#2a3050"></div>
<div style="position:absolute;left:621px;top:205px;width:2px;height:563px;background:#a05a30"></div>
<div style="position:absolute;left:623px;top:205px;width:2px;height:563px;background:#90d8e8"></div>
<div style="position:absolute;left:625px;top:205px;width:2px;height:563px;background:#303860"></div>
<div style="position:absolute;left:629px;top:205px;width:2px;height:563px;background:#3a2828"></div>
<div style="position:absolute;left:631px;top:205px;width:2px;height:563px;background:#e8c880"></div>
<div style="position:absolute;left:633px;top:205px;width:2px;height:563px;background:#4080d0"></div>
<div style="position:absolute;left:637px;top:205px;width:2px;height:563px;background:#30383c"></div>
<div style="position:absolute;left:692px;top:205px;width:1px;height:563px;background:#303a70"></div>
<div style="position:absolute;left:696px;top:205px;width:1px;height:563px;background:#5a3a30"></div>
<div style="position:absolute;left:697px;top:205px;width:2px;height:563px;background:#e8c888"></div>
<div style="position:absolute;left:699px;top:205px;width:2px;height:563px;background:#c0e8e8"></div>
<div style="position:absolute;left:701px;top:205px;width:2px;height:563px;background:#284080"></div>
<div style="position:absolute;left:762px;top:205px;width:2px;height:563px;background:#e8c888"></div>
<div style="position:absolute;left:764px;top:205px;width:2px;height:563px;background:#c0e8e8"></div>
<div style="position:absolute;left:766px;top:205px;width:2px;height:563px;background:#284080"></div>
<div style="position:absolute;left:821px;top:205px;width:2px;height:563px;background:#d8c8a8"></div>
<div style="position:absolute;left:823px;top:205px;width:3px;height:563px;background:#d4d0cc"></div>
<div style="position:absolute;left:826px;top:205px;width:2px;height:165px;background:#c07840"></div>
<div style="position:absolute;left:826px;top:370px;width:2px;height:398px;background:#a0c0d0"></div>
<div style="position:absolute;left:828px;top:205px;width:2px;height:563px;background:#88d0e0"></div>
<div style="position:absolute;left:830px;top:205px;width:2px;height:563px;background:#284890"></div>
<div style="position:absolute;left:851px;top:205px;width:2px;height:563px;background:#905030"></div>
<div style="position:absolute;left:853px;top:205px;width:1px;height:563px;background:#706040"></div>
<div style="position:absolute;left:854px;top:205px;width:3px;height:563px;background:#c8b090"></div>
<div style="position:absolute;left:890px;top:205px;width:1px;height:75px;background:#d0d8e0"></div>
<div style="position:absolute;left:891px;top:205px;width:2px;height:75px;background:#7090b0"></div>
<div style="position:absolute;left:893px;top:205px;width:4px;height:75px;background:#303448"></div>
<div style="position:absolute;left:893px;top:280px;width:1.5px;height:488px;background:#2a3450"></div>
<div style="position:absolute;left:892px;top:205px;width:1px;height:563px;background:#6a98c8"></div>
<div style="position:absolute;left:894px;top:205px;width:1px;height:27px;background:#70b0e0"></div>
<div style="position:absolute;left:925px;top:375px;width:1px;height:393px;background:#c89050"></div>
<div style="position:absolute;left:907px;top:205px;width:2px;height:563px;background:#3a2a2a"></div>
<div style="position:absolute;left:909px;top:205px;width:2px;height:563px;background:#e8b060"></div>
<div style="position:absolute;left:911px;top:205px;width:2px;height:563px;background:#4080d0"></div>
<div style="position:absolute;left:913px;top:205px;width:1px;height:563px;background:#3a2a2a"></div>
<div style="position:absolute;left:915px;top:205px;width:1px;height:563px;background:#e8b060"></div>
<div style="position:absolute;left:916px;top:205px;width:1px;height:563px;background:#d08040"></div>
<div style="position:absolute;left:917px;top:205px;width:2px;height:563px;background:#d0c0d8"></div>
<div style="position:absolute;left:919px;top:205px;width:2px;height:563px;background:#4080d0"></div>
<div style="position:absolute;left:923px;top:205px;width:1px;height:563px;background:#3a2a28"></div>
<div style="position:absolute;left:941px;top:205px;width:1px;height:563px;background:#a05030"></div>
<div style="position:absolute;left:942px;top:205px;width:3px;height:563px;background:#a0d8e8"></div>
<div style="position:absolute;left:946px;top:205px;width:1px;height:563px;background:#283060"></div>
<div style="position:absolute;left:955px;top:205px;width:2px;height:563px;background:#4a3028"></div>
<div style="position:absolute;left:957px;top:205px;width:2px;height:563px;background:#809880"></div>
<div style="position:absolute;left:959px;top:205px;width:2px;height:85px;background:#c0e0b0"></div>
<div style="position:absolute;left:959px;top:290px;width:1px;height:478px;background:#90a888"></div>
<div style="position:absolute;left:960px;top:290px;width:3px;height:478px;background:#2a3460"></div>
<div style="position:absolute;left:962px;top:205px;width:1px;height:563px;background:#283070"></div>
<div style="position:absolute;left:980px;top:205px;width:2px;height:563px;background:#804028"></div>
<div style="position:absolute;left:982px;top:205px;width:2px;height:563px;background:#c0e8c8"></div>
<div style="position:absolute;left:985px;top:205px;width:1px;height:563px;background:#4070c0"></div>
<div style="position:absolute;left:988px;top:205px;width:1px;height:563px;background:#804028"></div>
<div style="position:absolute;left:989px;top:205px;width:1px;height:563px;background:#f0f0f0"></div>
<div style="position:absolute;left:990px;top:205px;width:2px;height:563px;background:#5080b0"></div>
<div style="position:absolute;left:212px;top:218px;width:1144px;height:1px;background:#181818"></div>
<div style="position:absolute;left:212px;top:219px;width:1145px;height:1px;background:#8a8a8a"></div>
<div style="position:absolute;left:218px;top:325px;width:1135px;height:1px;background:#181818"></div>
<div style="position:absolute;left:218px;top:326px;width:1136px;height:1px;background:#8a8a8a"></div>
<div style="position:absolute;left:218px;top:241px;width:6px;height:1px;background:#181818"></div>
<div style="position:absolute;left:218px;top:242px;width:6px;height:1px;background:#8a8a8a"></div>
<div style="position:absolute;left:316px;top:241px;width:1037px;height:1px;background:#181818"></div>
<div style="position:absolute;left:316px;top:242px;width:1038px;height:1px;background:#8a8a8a"></div>
<div style="position:absolute;left:2px;top:720px;width:1358px;height:1px;background:#f2f2f2"></div>
<div style="position:absolute;left:514px;top:384px;width:260px;height:36px;background:#7b7c7b;border-radius:3px 3px 0 0"></div>
<div style="position:absolute;left:514px;top:420px;width:260px;height:324px;background:#ffffff;border-left:1px solid #8a8a8a;border-right:1px solid #1e1e1e"></div>
<svg style="position:absolute;left:524px;top:393px" width="15" height="18" viewBox="0 0 15 18"><path d="M7.5 1 C11.5 1 14 3.8 14 7.2 C14 10.5 11.5 12.8 8.5 13.5 L6 17 L6 13.3 C3 12.8 1 10.5 1 7.2 C1 3.8 3.5 1 7.5 1 Z" fill="#ffffff"/></svg>
<div style="position:absolute;left:551px;top:394.49px;font-size:13.6px;line-height:13.6px;color:#ffffff;white-space:pre;font-weight:bold;letter-spacing:1.05px">Hangouts</div>
<div style="position:absolute;left:721px;top:403.5px;width:11px;height:4px;background:#ffffff"></div>
<svg style="position:absolute;left:749px;top:396px" width="12" height="12" viewBox="0 0 12 12"><path d="M1.2 1.2 L10.8 10.8 M10.8 1.2 L1.2 10.8" stroke="#fff" stroke-width="2"/></svg>
<svg style="position:absolute;left:530px;top:433px" width="16" height="16" viewBox="0 0 16 16"><circle cx="6.3" cy="6.3" r="4.6" fill="none" stroke="#222" stroke-width="2"/><path d="M9.6 9.6 L14.3 14.3" stroke="#222" stroke-width="2.4"/></svg>
<div style="position:absolute;left:554px;top:433.80px;font-size:13px;line-height:13px;color:#a8a8a8;white-space:pre;">New Hangout</div>
<div style="position:absolute;left:755px;top:440px;width:0;height:0;border-left:4.5px solid transparent;border-right:4.5px solid transparent;border-top:5px solid #cfcfcf"></div>
<div style="position:absolute;left:515px;top:461px;width:257px;height:1px;background:#ebebeb"></div>
<div style="position:absolute;left:763px;top:463px;width:9px;height:37px;background:#c8c8c8"></div>
<div style="position:absolute;left:580.3px;top:479.15px;font-size:13.05px;line-height:13.05px;color:#6a6a6a;white-space:pre;">Clairce Crookston</div>
<div style="position:absolute;left:580.3px;top:501.15px;font-size:13.05px;line-height:13.05px;color:#aaaaaa;white-space:pre;">Me: hi</div>
<div style="position:absolute;left:700px;width:53px;top:481.53px;font-size:11.3px;line-height:11.3px;color:#b0b0b0;text-align:right">34m</div>
<div style="position:absolute;left:580.3px;top:544.95px;font-size:13.05px;line-height:13.05px;color:#6a6a6a;white-space:pre;">Re Wolfram</div>
<div style="position:absolute;left:580.3px;top:566.75px;font-size:13.05px;line-height:13.05px;color:#aaaaaa;white-space:pre;">Me: kk</div>
<div style="position:absolute;left:700px;width:53px;top:547.33px;font-size:11.3px;line-height:11.3px;color:#b0b0b0;text-align:right">Fri</div>
<div style="position:absolute;left:580.3px;top:611.25px;font-size:13.05px;line-height:13.05px;color:#6a6a6a;white-space:pre;">north wiebesick</div>
<div style="position:absolute;left:580.3px;top:632.75px;font-size:13.05px;line-height:13.05px;color:#aaaaaa;white-space:pre;">Me: not burned it yet</div>
<div style="position:absolute;left:700px;width:53px;top:613.63px;font-size:11.3px;line-height:11.3px;color:#b0b0b0;text-align:right">Wed</div>
<div style="position:absolute;left:580.3px;top:676.75px;font-size:13.05px;line-height:13.05px;color:#6a6a6a;white-space:pre;">Andreas Wennerberg</div>
<div style="position:absolute;left:580.3px;top:699.15px;font-size:13.05px;line-height:13.05px;color:#aaaaaa;white-space:pre;">Me: nini</div>
<div style="position:absolute;left:700px;width:53px;top:679.13px;font-size:11.3px;line-height:11.3px;color:#b0b0b0;text-align:right">Wed</div>
<div style="position:absolute;left:515px;top:531px;width:242px;height:1px;background:#e2e2e2"></div>
<div style="position:absolute;left:515px;top:597px;width:242px;height:1px;background:#e2e2e2"></div>
<div style="position:absolute;left:515px;top:663px;width:242px;height:1px;background:#e2e2e2"></div>
<div style="position:absolute;left:515px;top:729px;width:242px;height:1px;background:#e2e2e2"></div>
<svg style="position:absolute;left:525px;top:476px" width="46" height="46" viewBox="0 0 46 46"><defs><clipPath id="c1"><circle cx="23" cy="23" r="23"/></clipPath></defs>
<g clip-path="url(#c1)"><rect width="46" height="46" fill="#fe0000"/>
<path d="M20 46 L20.5 20 C20.5 14 26 12 31 13 C35 14 37.5 18 38 26 L41 44 L32 46 Z" fill="#4a2a1a"/>
<path d="M23 19 C26 15.5 32 16 33.5 22 C34.5 28 31 33 27.5 33 C24 33 22 28 23 19 Z" fill="#f2dcc0"/>
<path d="M22 22 C23 15 31 13 35 18 L31 17.5 L25 21 Z" fill="#4a2a1a"/>
<ellipse cx="31" cy="22.5" rx="1.8" ry="2.2" fill="#5a3020"/><circle cx="31.5" cy="22" r="0.7" fill="#fff"/>
<path d="M24.5 22.5 L27 22" stroke="#5a3020" stroke-width="0.8"/>
<ellipse cx="29" cy="29.5" rx="1.6" ry="1.1" fill="#e090c8"/>
<path d="M17 46 L19 36 C21 33 34 32.5 37 36 L38 46 Z" fill="#121212"/>
<path d="M21 37 L13 29.5 L10.5 31.5 L18 41 Z" fill="#121212"/>
<path d="M6 28 L10 28.5 L11.5 31 L8.5 32 L6.5 30 Z" fill="#e8e4cc"/>
<rect x="28" y="33" width="2.5" height="4" fill="#d01010"/>
<circle cx="28.5" cy="42" r="1" fill="#d8d8d8"/><circle cx="27.5" cy="45" r="1" fill="#d8d8d8"/></g></svg>
<div style="position:absolute;left:561.5px;top:578.5px;width:11px;height:11px;background:#2faa1a;border-radius:50%"></div>
<svg style="position:absolute;left:525px;top:607.5px" width="46" height="46" viewBox="0 0 46 46"><defs><clipPath id="c3"><circle cx="23" cy="23" r="23"/></clipPath><radialGradient id="fg" cx="0.45" cy="0.45" r="0.6"><stop offset="0" stop-color="#f4e4dc"/><stop offset="0.7" stop-color="#dcb8a8"/><stop offset="1" stop-color="#a07868"/></radialGradient></defs>
<g clip-path="url(#c3)"><rect width="46" height="46" fill="#0e0c0c"/>
<path d="M0 12 L5 14 L6 30 L0 32 Z" fill="#4a5560"/>
<path d="M0 30 L5 29 L30 46 L18 46 Z" fill="#8a6e74"/>
<path d="M0 33 L4 31 L24 46 L14 46 Z" fill="#5a5a5a"/>
<path d="M17 40 C20 36 28 36 33 40 L34 46 L22 46 Z" fill="#1e2a1e"/><path d="M26 42 L33 42 L33 44 L26 44 Z" fill="#3a6a3a"/>
<path d="M15 26 C14 18 17 14 23 14 C30 14 34 18 33 26 C33 34 29 39 24 39 C19 39 15 34 15 26 Z" fill="url(#fg)"/>
<path d="M15 20 C16 13 22 11 27 12 C31 13 34 16 34 21 C31 17 25 16 20 17 Z" fill="#9a8068"/>
<path d="M18 23 L22 23.5 M25 23.5 L29 23" stroke="#8a5a58" stroke-width="1.2"/>
<path d="M21 32 L27 32" stroke="#b88080" stroke-width="1"/>
<rect x="42" y="30" width="3" height="4" fill="#9aa08a"/></g></svg>
<svg style="position:absolute;left:532px;top:673px" width="32" height="48" viewBox="0 0 32 48"><defs><linearGradient id="sh" x1="0" x2="1"><stop offset="0" stop-color="#7a30c8"/><stop offset="0.5" stop-color="#9a50e0"/><stop offset="1" stop-color="#7a30c8"/></linearGradient><radialGradient id="fc" cx="0.5" cy="0.4" r="0.6"><stop offset="0" stop-color="#fce8d8"/><stop offset="1" stop-color="#f0c8a8"/></radialGradient></defs>
<path d="M8 47 C8 42 11 38 16 38 C21 38 24 42 25 47 Z" fill="url(#sh)"/>
<rect x="14" y="35" width="5" height="4" fill="#e8b890"/>
<ellipse cx="16.5" cy="24" rx="12" ry="13" fill="url(#fc)"/>
<path d="M3.5 24 C1.5 9 8 2 16.5 2 C25 2 31 9 29.5 24 L28 18 L25.5 16 L23 11 L20.5 15 L18.5 10.5 L16 14.5 L13 10 L11 15 L8 12 L6 18 Z" fill="#6a4428"/>
<ellipse cx="11" cy="21.5" rx="1.8" ry="1.4" fill="#111"/><ellipse cx="22" cy="21.5" rx="1.8" ry="1.4" fill="#111"/>
<path d="M8 20.5 L14 20.5 M19 20.5 L25 20.5" stroke="#333" stroke-width="0.5"/>
<path d="M16.5 26 C15 28 15.5 30 17.5 29.5" stroke="#333" stroke-width="0.7" fill="none"/>
<path d="M12 31 C15 33 19 33 22 31" stroke="#8a5040" stroke-width="0.8" fill="none"/></svg>
<div style="position:absolute;left:537px;top:740px;width:21px;height:4px;overflow:hidden"><div style="width:21px;height:14px;border-radius:50%;background:#5a3e2a"></div></div>
<svg style="position:absolute;left:0px;top:0px" width="30" height="24" viewBox="0 0 30 24">
<g fill="#363636" stroke="#b8b8b8" stroke-width="0.8"><ellipse cx="11.8" cy="8.2" rx="1.8" ry="2.2"/><ellipse cx="15.5" cy="6.6" rx="1.8" ry="2"/><ellipse cx="19.2" cy="5.6" rx="1.8" ry="2"/><ellipse cx="24.2" cy="4.3" rx="3.3" ry="2.7"/></g>
<path d="M11.5 15 C11.5 11 15.5 9.8 20.5 9.8 C24 9.8 24.8 12.3 22.8 14.3 C20.8 16.2 18.2 16.6 18.2 18.2 C18.2 19.3 20 18.3 21.8 17.3 C24.8 16.5 25.3 20.2 22.8 22.2 C19.8 24 12 23.5 11.5 17 Z" fill="#454542" stroke="#c0c0c0" stroke-width="0.9"/></svg>
<svg style="position:absolute;left:238px;top:0px" width="24" height="24" viewBox="0 0 24 24"><circle cx="12" cy="12" r="10.5" fill="none" stroke="#1e88d8" stroke-width="2"/><path d="M9 19 L9 7 C9 5 15 5 15 7 L15 9 L12 9 L12 8 L11 8 L11 11 L15 11 L15 19 Z" fill="#1e88d8"/></svg>
<svg style="position:absolute;left:263px;top:3px" width="22" height="18" viewBox="0 0 22 18"><path d="M1 10 C1 4 5 1 9 1 C13 1 17 4 17 10 C15 14 4 14 1 10 Z" fill="#e8e8e4"/><path d="M1 10 C4 14 15 14 17 10 L17 12 C15 16 4 16 1 12 Z" fill="#b8b8b0"/><path d="M17 11 L20 14" stroke="#e03a1a" stroke-width="2"/></svg>
<svg style="position:absolute;left:287px;top:1px" width="22" height="23" viewBox="0 0 22 23"><path d="M11 1 L21 6 L11 11 L1 6 Z" fill="#6cb040"/><path d="M1 6 L11 11 L11 22 L1 17 Z" fill="#8a6040"/><path d="M21 6 L11 11 L11 22 L21 17 Z" fill="#6a4a30"/><path d="M1 6 L11 11 L21 6 L21 8 L11 13 L1 8 Z" fill="#5a9a30"/></svg>
<svg style="position:absolute;left:311px;top:1px" width="22" height="22" viewBox="0 0 22 22"><circle cx="11" cy="11" r="10.5" fill="#3a7ac8"/><circle cx="11" cy="11" r="9.5" fill="none" stroke="#7ab0e8" stroke-width="0.8"/><circle cx="11" cy="5" r="1.8" fill="#fff"/><path d="M4 8 L18 8 M11 8 L11 13 L7 19 M11 13 L15 19" stroke="#fff" stroke-width="1.8" fill="none"/></svg>
<div style="position:absolute;left:336px;top:1.5px;width:21px;height:21px;border-radius:50%;background:conic-gradient(from -60deg,#db4437 0 120deg,#f4c20d 120deg 240deg,#0f9d58 240deg 360deg)"><div style="position:absolute;left:5.5px;top:5.5px;width:10px;height:10px;border-radius:50%;background:#4a8af4;box-shadow:0 0 0 1.5px #fff"></div></div>
<div style="position:absolute;left:360px;top:3px;width:21px;height:19px;background:#d8d8d8;border:1px solid #888"><div style="position:absolute;left:1px;top:1px;width:17px;height:14px;background:linear-gradient(#383838,#101010)"><span style="position:absolute;left:1px;top:-2px;color:#eee;font-size:7px;font-family:'Liberation Mono'">&gt;_</span></div></div>
<svg style="position:absolute;left:389px;top:0px" width="18" height="24" viewBox="0 0 18 24"><rect x="1" y="1" width="16" height="22" rx="8" fill="#3a78c8"/><path d="M5 7 L13 15 L9 19 L9 5 L13 9 L5 17" stroke="#fff" stroke-width="1.6" fill="none"/></svg>
<svg style="position:absolute;left:478px;top:1px" width="23" height="22" viewBox="0 0 23 22"><circle cx="10" cy="6" r="5" fill="#d8d8d8"/><path d="M1 21 C1 13 5 11 10 11 C15 11 19 13 19 21 Z" fill="#c8c8c8"/><circle cx="17" cy="16" r="5.5" fill="#2a5ab8" stroke="#fff" stroke-width="0.8"/><text x="15.6" y="19.5" font-size="8" font-style="italic" font-weight="bold" fill="#fff" font-family="Liberation Serif">i</text></svg>
<div style="position:absolute;left:1074px;top:2px;width:2px;height:2px;background:#b0b0b0"></div>
<div style="position:absolute;left:1074px;top:6px;width:2px;height:2px;background:#b0b0b0"></div>
<div style="position:absolute;left:1074px;top:10px;width:2px;height:2px;background:#b0b0b0"></div>
<div style="position:absolute;left:1074px;top:14px;width:2px;height:2px;background:#b0b0b0"></div>
<div style="position:absolute;left:1074px;top:18px;width:2px;height:2px;background:#b0b0b0"></div>
<div style="position:absolute;left:1074px;top:22px;width:2px;height:2px;background:#b0b0b0"></div>
<svg style="position:absolute;left:1081px;top:2px" width="16" height="19" viewBox="0 0 16 19"><path d="M8 1 C12 1 15 4 15 8 C15 11.5 12.5 14 9.5 14.5 L8.5 18.5 L7.5 14.5 C4 14 1 11.5 1 8 C1 4 4 1 8 1 Z" fill="#4aa040"/></svg>
<svg style="position:absolute;left:1102px;top:3px" width="18" height="18" viewBox="0 0 18 18"><path d="M4 1 L9 4 L4 7 L-1 4 Z M14 1 L19 4 L14 7 L9 4 Z M4 7 L9 10 L4 13 L-1 10 Z M14 7 L9 10 L14 13 L19 10 Z M4 14 L9 17 L14 14" fill="#f4f4f4" transform="translate(1,0) scale(0.9)"/><circle cx="13.5" cy="13.5" r="4" fill="#2aa84a"/><path d="M11.5 13.5 L13 15 L15.5 12" stroke="#fff" stroke-width="1" fill="none"/></svg>
<div style="position:absolute;left:1125px;top:3px;width:18px;height:18px;border-radius:50%;background:conic-gradient(from -60deg,#db4437 0 120deg,#f4c20d 120deg 240deg,#0f9d58 240deg 360deg)"><div style="position:absolute;left:4.5px;top:4.5px;width:9px;height:9px;border-radius:50%;background:#4a8af4;box-shadow:0 0 0 1.5px #fff"></div></div>
<div style="position:absolute;left:1146px;top:1px;width:22px;height:23px;background:linear-gradient(#f4f6f8,#d8e0e8);border-bottom:2px solid #000;text-align:center;font-family:'Liberation Serif';font-size:20px;line-height:21px;color:#7890a8;font-weight:bold">W</div>
<svg style="position:absolute;left:1171px;top:2px" width="19" height="20" viewBox="0 0 19 20"><path d="M1 7 L5 7 L9 3 L9 17 L5 13 L1 13 Z" fill="#c8c8c8"/><path d="M11 7 C12.5 8.5 12.5 11.5 11 13 M14 5 C16.5 7.5 16.5 12.5 14 15" stroke="#3a68b8" stroke-width="1.2" fill="none"/></svg>
<svg style="position:absolute;left:1197px;top:4px" width="19" height="18" viewBox="0 0 19 18"><rect x="1" y="12" width="3" height="5" fill="#3a68b8"/><rect x="5.5" y="9" width="3" height="8" fill="#3a68b8"/><rect x="10" y="5.5" width="3" height="11.5" fill="#3a68b8"/><rect x="14.5" y="1" width="3" height="16" fill="#d8d8d8"/></svg>
<svg style="position:absolute;left:1220px;top:1px" width="18" height="22" viewBox="0 0 18 22"><rect x="4" y="0.5" width="5" height="2" fill="#ddd"/><rect x="1" y="2" width="12" height="17" fill="#e8e8e8" stroke="#aaa" stroke-width="0.6"/><rect x="2.5" y="4" width="9" height="14" fill="#2a5ab0"/><rect x="4" y="5" width="3" height="12" fill="#8ab0e0"/><path d="M9 13 L17 13 L17 18 L14 18 L14 21 L12 21 L12 18 L9 18 Z" fill="#e0e0e0" stroke="#999" stroke-width="0.6"/></svg>
<svg style="position:absolute;left:11px;top:33px" width="7" height="7" viewBox="0 0 7 7"><path d="M1 2 L4 2 L5 4 L3 6 L1 6 Z" fill="#fff"/><path d="M5 1 L6 1 L5.5 3" stroke="#fff" stroke-width="0.8"/></svg>
<svg style="position:absolute;left:4px;top:78px" width="17" height="17" viewBox="0 0 17 17"><path d="M0.8 5 L8 5 L8 1 L16 8.5 L8 16 L8 12 L0.8 12 Z" fill="#5a90e0" stroke="#1a50b0" stroke-width="0.9"/><path d="M1.5 6 L8.5 6 L8.5 3 L14 8" stroke="#a8c8f8" stroke-width="1" fill="none"/></svg>
<svg style="position:absolute;left:1339px;top:78px" width="16" height="16" viewBox="0 0 16 16"><defs><linearGradient id="xg" x1="0" y1="0" x2="0" y2="1"><stop offset="0" stop-color="#ff8a30"/><stop offset="1" stop-color="#e04000"/></linearGradient></defs><path d="M0.8 4 L4 0.8 L8 4.8 L12 0.8 L15.2 4 L11.2 8 L15.2 12 L12 15.2 L8 11.2 L4 15.2 L0.8 12 L4.8 8 Z" fill="url(#xg)" stroke="#8a1000" stroke-width="1" stroke-linejoin="round"/></svg>
<svg style="position:absolute;left:132px;top:538px" width="14" height="21" viewBox="0 0 14 21"><path d="M1.2 1 L1.2 17 L5 13.5 L7.8 19.5 L10.2 18.4 L7.5 12.5 L12.5 12.5 Z" fill="#f4f4f4" stroke="#000" stroke-width="1.4" stroke-linejoin="round"/></svg>
</body></html>
